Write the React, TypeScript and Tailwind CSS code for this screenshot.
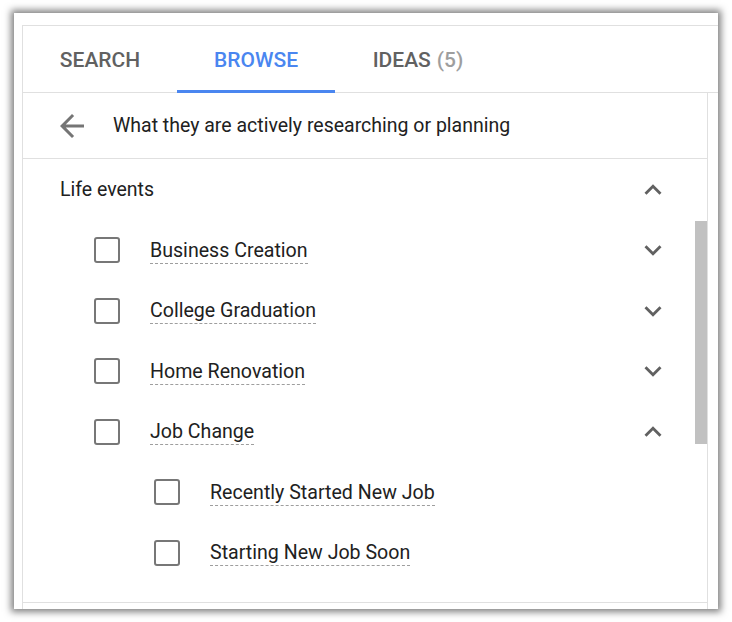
const items = [
  { label: 'Business Creation', open: false, depth: 0 },
  { label: 'College Graduation', open: false, depth: 0 },
  { label: 'Home Renovation', open: false, depth: 0 },
  { label: 'Job Change', open: true, depth: 0 },
  { label: 'Recently Started New Job', depth: 1 },
  { label: 'Starting New Job Soon', depth: 1 },
];

function Chevron({ up }: { up?: boolean }) {
  return (
    <svg viewBox="0 0 24 24" className="w-[34px] h-[34px] fill-[#616161]">
      {up ? (
        <path d="M12 8l-6 6 1.41 1.41L12 10.83l4.59 4.58L18 14z" />
      ) : (
        <path d="M16.59 8.59L12 13.17 7.41 8.59 6 10l6 6 6-6z" />
      )}
    </svg>
  );
}

export default function App() {
  return (
    <div className="w-[732px] h-[622px] bg-white pt-[13px] pl-[14px] font-['Roboto',sans-serif]">
      <div className="w-[704px] h-[596px] bg-white overflow-hidden pl-[8px] pt-[12px] shadow-[0_0_7px_3px_rgba(0,0,0,0.5)]">
        <div className="h-[620px] border-l border-t border-[#e0e0e0] flex flex-col">
          {/* Tabs */}
          <div className="h-[67px] shrink-0 flex border-b border-[#e0e0e0] text-[21px] font-medium">
            <div className="w-[154px] flex items-center justify-center pt-[4px] text-[#616161]">SEARCH</div>
            <div className="w-[158px] flex items-center justify-center pt-[4px] text-[#4a86f0] relative">
              BROWSE
              <div className="absolute left-0 right-0 -bottom-px h-[3px] bg-[#4a86f0]" />
            </div>
            <div className="w-[166px] flex items-center justify-center pt-[4px] text-[#616161]">
              IDEAS<span className="ml-[6px] text-[#9e9e9e]">(5)</span>
            </div>
          </div>

          <div className="flex-1 mr-[10px] border-r border-[#e0e0e0] relative">
            {/* Back row */}
            <div className="h-[66px] flex items-center border-b border-[#e0e0e0] pl-[31px]">
              <svg viewBox="0 0 24 24" className="w-[36px] h-[36px] fill-[#757575]">
                <path d="M20 11H7.83l5.59-5.59L12 4l-8 8 8 8 1.41-1.41L7.83 13H20v-2z" />
              </svg>
              <span className="ml-[23px] text-[19.5px] text-[#212121]">What they are actively researching or planning</span>
            </div>

            {/* Life events */}
            <div className="border-b border-[#e0e0e0] pb-[19px]">
              <div className="h-[61px] flex items-center justify-between pl-[37px] pr-[37px]">
                <span className="text-[19.5px] text-[#212121] pt-[1px]">Life events</span>
                <Chevron up />
              </div>
              {items.map((item) => (
                <div
                  key={item.label}
                  className={
                    'h-[60.5px] flex items-center pr-[37px] ' +
                    (item.depth ? 'pl-[131px]' : 'pl-[71px]')
                  }
                >
                  <div className="w-[26px] h-[26px] shrink-0 rounded-[3px] border-[2.5px] border-[#777]" />
                  <span className="ml-[30px] mt-[2px] text-[19.6px] leading-[24px] text-[#212121] border-b border-dashed border-[#9e9e9e]">
                    {item.label}
                  </span>
                  <div className="flex-1" />
                  {item.depth === 0 && <Chevron up={item.open} />}
                </div>
              ))}
            </div>

            {/* scrollbar thumb */}
            <div className="absolute right-0 top-[128px] w-[12px] h-[223px] bg-[#c1c1c1]" />
          </div>
        </div>
      </div>
    </div>
  );
}
